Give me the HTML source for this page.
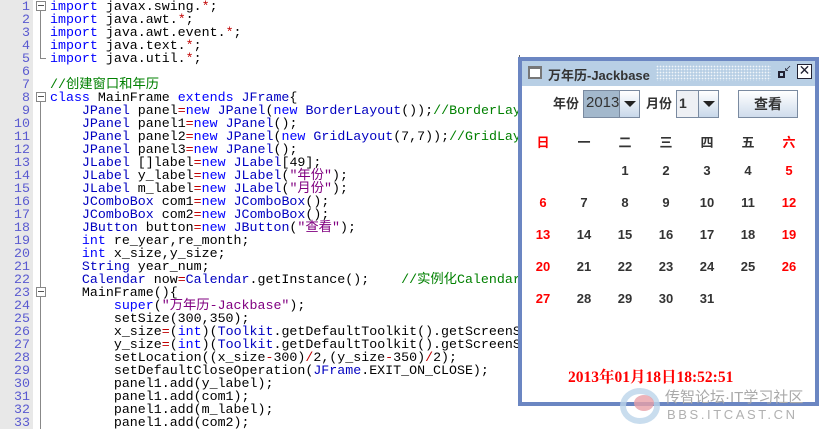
<!DOCTYPE html>
<html><head><meta charset="utf-8"><style>
*{margin:0;padding:0;box-sizing:border-box}
body{width:827px;height:429px;overflow:hidden;background:#fff;position:relative;font-family:"Liberation Mono","Noto Sans CJK SC",monospace}
#gut{position:absolute;left:0;top:0;width:33px;height:429px;background:#e8e8e8}
.ln{color:#5a5ad0;font-size:13.3px;line-height:13px}
#code{position:absolute;left:50px;top:0;font-size:13.3px;line-height:13px;white-space:pre;color:#000}
.k{color:#0000ff}.r{color:#c00000}.g{color:#008000}.p{color:#800080}.t{color:#0000c0}
.fold{position:absolute;left:36px;width:10px;height:10px;border:1px solid #888;background:#fff}
.fold:after{content:"";position:absolute;left:1px;top:3px;width:6px;height:1px;background:#555}
.vl{position:absolute;left:40px;width:1px;background:#888}
#win{position:absolute;left:518px;top:57px;width:301px;height:349px;background:#6b86c2}
#title{position:absolute;left:4px;top:4px;width:293px;height:25px;background:#b8cfe5}
#content{position:absolute;left:4px;top:29px;width:293px;height:316px;background:#fff}
.ui{font-family:"Liberation Sans","Noto Sans CJK SC",sans-serif;font-weight:bold}
.cell{position:absolute;width:30px;text-align:center;font-size:13px;color:#333;font-family:"Liberation Sans","Noto Sans CJK SC",sans-serif;font-weight:bold}
.red{color:#f00}
</style></head><body>
<div id="gut"></div>
<div style="position:absolute;left:0;top:0;width:30px">
<div class="ln" style="text-align:right;width:30px">1<br>2<br>3<br>4<br>5<br>6<br>7<br>8<br>9<br>10<br>11<br>12<br>13<br>14<br>15<br>16<br>17<br>18<br>19<br>20<br>21<br>22<br>23<br>24<br>25<br>26<br>27<br>28<br>29<br>30<br>31<br>32<br>33</div>
</div>
<div class="fold" style="top:1px"></div>
<div class="vl" style="top:11px;height:48px"></div>
<div style="position:absolute;left:40px;top:58px;width:6px;height:1px;background:#888"></div>
<div class="fold" style="top:92px"></div>
<div class="vl" style="top:102px;height:327px"></div>
<div class="fold" style="top:287px"></div>
<div id="code"><span class="k">import</span> javax.swing.<span class="r">*</span>;
<span class="k">import</span> java.awt.<span class="r">*</span>;
<span class="k">import</span> java.awt.event.<span class="r">*</span>;
<span class="k">import</span> java.text.<span class="r">*</span>;
<span class="k">import</span> java.util.<span class="r">*</span>;

<span class="g">//创建窗口和年历</span>
<span class="k">class</span> MainFrame <span class="k">extends</span> <span class="t">JFrame</span>{
    <span class="t">JPanel</span> panel<span class="r">=</span><span class="k">new</span> <span class="t">JPanel</span>(<span class="k">new</span> <span class="t">BorderLayout</span>());<span class="g">//BorderLayout</span>
    <span class="t">JPanel</span> panel1<span class="r">=</span><span class="k">new</span> <span class="t">JPanel</span>();
    <span class="t">JPanel</span> panel2<span class="r">=</span><span class="k">new</span> <span class="t">JPanel</span>(<span class="k">new</span> <span class="t">GridLayout</span>(7,7));<span class="g">//GridLayout</span>
    <span class="t">JPanel</span> panel3<span class="r">=</span><span class="k">new</span> <span class="t">JPanel</span>();
    <span class="t">JLabel</span> []label<span class="r">=</span><span class="k">new</span> <span class="t">JLabel</span>[49];
    <span class="t">JLabel</span> y_label<span class="r">=</span><span class="k">new</span> <span class="t">JLabel</span>(<span class="p">"年份"</span>);
    <span class="t">JLabel</span> m_label<span class="r">=</span><span class="k">new</span> <span class="t">JLabel</span>(<span class="p">"月份"</span>);
    <span class="t">JComboBox</span> com1<span class="r">=</span><span class="k">new</span> <span class="t">JComboBox</span>();
    <span class="t">JComboBox</span> com2<span class="r">=</span><span class="k">new</span> <span class="t">JComboBox</span>();
    <span class="t">JButton</span> button<span class="r">=</span><span class="k">new</span> <span class="t">JButton</span>(<span class="p">"查看"</span>);
    <span class="k">int</span> re_year,re_month;
    <span class="k">int</span> x_size,y_size;
    <span class="t">String</span> year_num;
    <span class="t">Calendar</span> now<span class="r">=</span><span class="t">Calendar</span>.getInstance();    <span class="g">//实例化Calendar</span>
    MainFrame(){
        <span class="k">super</span>(<span class="p">"万年历-Jackbase"</span>);
        setSize(300,350);
        x_size<span class="r">=</span>(<span class="k">int</span>)(<span class="t">Toolkit</span>.getDefaultToolkit().getScreenSize
        y_size<span class="r">=</span>(<span class="k">int</span>)(<span class="t">Toolkit</span>.getDefaultToolkit().getScreenSize
        setLocation((x_size<span class="r">-</span>300)<span class="r">/</span>2,(y_size<span class="r">-</span>350)<span class="r">/</span>2);
        setDefaultCloseOperation(<span class="t">JFrame</span>.EXIT_ON_CLOSE);
        panel1.add(y_label);
        panel1.add(com1);
        panel1.add(m_label);
        panel1.add(com2);</div>
<div style="position:absolute;left:519px;top:55px;width:1px;height:10px;background:#666"></div>
<div id="win">
 <div id="title">
  <div style="position:absolute;left:6px;top:5px;width:14px;height:13px;border:2px solid #777;background:#fff;border-top-width:3px"></div>
  <div class="ui" style="position:absolute;left:26px;top:4px;font-size:13px;color:#333">万年历-Jackbase</div>
  <div style="position:absolute;left:134px;top:4px;width:115px;height:16px;background-image:radial-gradient(#fff 35%,transparent 40%);background-size:3px 3px;opacity:.8"></div>
  <div style="position:absolute;left:256px;top:10px;width:7px;height:7px;border:2px solid #223"></div>
  <div style="position:absolute;left:262px;top:3px;font-size:9px;color:#223;font-family:'DejaVu Sans'">↙</div>
  <div style="position:absolute;left:275px;top:3px;width:15px;height:15px;border:1px solid #223;background:#fff;font-size:14px;line-height:13px;text-align:center;font-family:'DejaVu Sans';color:#223">✕</div>
 </div>
 <div id="content">
  <div class="ui" style="position:absolute;left:31px;top:7px;font-size:13px;color:#333">年份</div>
  <div style="position:absolute;left:61px;top:4px;width:57px;height:28px;border:1px solid #7a8aa0;background:#a3b8cc">
   <div class="ui" style="position:absolute;left:2px;top:3px;font-size:15px;font-weight:normal;color:#333">2013</div>
   <div style="position:absolute;left:35px;top:0;width:20px;height:26px;border-left:1px solid #7a8aa0;background:linear-gradient(#fff,#c8d8ea)"><div style="position:absolute;left:4px;top:10px;border-left:6px solid transparent;border-right:6px solid transparent;border-top:6px solid #222"></div></div>
  </div>
  <div class="ui" style="position:absolute;left:124px;top:7px;font-size:13px;color:#333">月份</div>
  <div style="position:absolute;left:154px;top:4px;width:43px;height:28px;border:1px solid #7a8aa0;background:#eef0f4">
   <div class="ui" style="position:absolute;left:2px;top:4px;font-size:14px;color:#333">1</div>
   <div style="position:absolute;left:21px;top:0;width:20px;height:26px;border-left:1px solid #7a8aa0;background:linear-gradient(#fff,#c8d8ea)"><div style="position:absolute;left:4px;top:10px;border-left:6px solid transparent;border-right:6px solid transparent;border-top:6px solid #222"></div></div>
  </div>
  <div class="ui" style="position:absolute;left:216px;top:4px;width:60px;height:28px;border:1px solid #7a8aa0;background:linear-gradient(#fff,#cfdcec);text-align:center;font-size:14px;line-height:26px;color:#333">查看</div>
 </div>
</div>
<div class="cell red" style="left:528px;top:132px">日</div>
<div class="cell" style="left:569px;top:132px">一</div>
<div class="cell" style="left:610px;top:132px">二</div>
<div class="cell" style="left:651px;top:132px">三</div>
<div class="cell" style="left:692px;top:132px">四</div>
<div class="cell" style="left:733px;top:132px">五</div>
<div class="cell red" style="left:774px;top:132px">六</div>
<div class="cell" style="left:610px;top:163px">1</div><div class="cell" style="left:651px;top:163px">2</div><div class="cell" style="left:692px;top:163px">3</div><div class="cell" style="left:733px;top:163px">4</div><div class="cell red" style="left:774px;top:163px">5</div>
<div class="cell red" style="left:528px;top:195px">6</div><div class="cell" style="left:569px;top:195px">7</div><div class="cell" style="left:610px;top:195px">8</div><div class="cell" style="left:651px;top:195px">9</div><div class="cell" style="left:692px;top:195px">10</div><div class="cell" style="left:733px;top:195px">11</div><div class="cell red" style="left:774px;top:195px">12</div>
<div class="cell red" style="left:528px;top:227px">13</div><div class="cell" style="left:569px;top:227px">14</div><div class="cell" style="left:610px;top:227px">15</div><div class="cell" style="left:651px;top:227px">16</div><div class="cell" style="left:692px;top:227px">17</div><div class="cell" style="left:733px;top:227px">18</div><div class="cell red" style="left:774px;top:227px">19</div>
<div class="cell red" style="left:528px;top:259px">20</div><div class="cell" style="left:569px;top:259px">21</div><div class="cell" style="left:610px;top:259px">22</div><div class="cell" style="left:651px;top:259px">23</div><div class="cell" style="left:692px;top:259px">24</div><div class="cell" style="left:733px;top:259px">25</div><div class="cell red" style="left:774px;top:259px">26</div>
<div class="cell red" style="left:528px;top:291px">27</div><div class="cell" style="left:569px;top:291px">28</div><div class="cell" style="left:610px;top:291px">29</div><div class="cell" style="left:651px;top:291px">30</div><div class="cell" style="left:692px;top:291px">31</div>
<div style="position:absolute;left:568px;top:365px;font-family:'Liberation Serif','Noto Serif CJK SC',serif;font-weight:bold;font-size:15.5px;color:#f00;white-space:nowrap">2013年01月18日18:52:51</div>
<div style="position:absolute;left:620px;top:388px;width:40px;height:36px;border-radius:50%;border:6px solid #bcd4ea;opacity:.8"></div>
<div style="position:absolute;left:634px;top:395px;width:20px;height:16px;border-radius:50%;background:#e8a0a8;opacity:.8"></div>
<div style="position:absolute;left:665px;top:386px;font-family:'Liberation Sans','Noto Sans CJK SC',sans-serif;font-size:15px;color:#a9a9a9;white-space:nowrap">传智论坛·IT学习社区</div>
<div style="position:absolute;left:667px;top:407px;font-family:'Liberation Sans',sans-serif;font-size:13px;letter-spacing:2.6px;color:#b0b0b0;white-space:nowrap">BBS.ITCAST.CN</div>
</body></html>
